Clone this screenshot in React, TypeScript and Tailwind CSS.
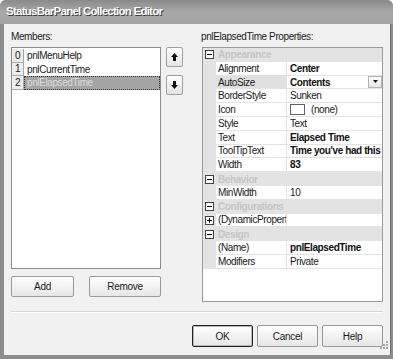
import React from "react";

const font = { fontFamily: '"Liberation Sans", Arial, sans-serif' };

type Prop = {
  kind: "cat" | "prop";
  name: string;
  value?: string;
  bold?: boolean;
  expand?: boolean;
  selected?: boolean;
  dropdown?: boolean;
  swatch?: boolean;
};

const rows: Prop[] = [
  { kind: "cat", name: "Appearance" },
  { kind: "prop", name: "Alignment", value: "Center", bold: true },
  { kind: "prop", name: "AutoSize", value: "Contents", bold: true, selected: true, dropdown: true },
  { kind: "prop", name: "BorderStyle", value: "Sunken" },
  { kind: "prop", name: "Icon", value: "(none)", swatch: true },
  { kind: "prop", name: "Style", value: "Text" },
  { kind: "prop", name: "Text", value: "Elapsed Time", bold: true },
  { kind: "prop", name: "ToolTipText", value: "Time you've had this form open", bold: true },
  { kind: "prop", name: "Width", value: "83", bold: true },
  { kind: "cat", name: "Behavior" },
  { kind: "prop", name: "MinWidth", value: "10" },
  { kind: "cat", name: "Configurations" },
  { kind: "prop", name: "(DynamicProperties)", value: "", expand: true },
  { kind: "cat", name: "Design" },
  { kind: "prop", name: "(Name)", value: "pnlElapsedTime", bold: true },
  { kind: "prop", name: "Modifiers", value: "Private" },
];

const members = ["pnlMenuHelp", "pnlCurrentTime", "pnlElapsedTime"];

function PlusMinus({ plus }: { plus?: boolean }) {
  return (
    <div className="relative w-[9px] h-[9px] border border-[#404040] bg-white">
      <div className="absolute left-[1px] top-[3px] w-[5px] h-px bg-black" />
      {plus && <div className="absolute left-[3px] top-[1px] w-px h-[5px] bg-black" />}
    </div>
  );
}

function Btn({ label, w, def }: { label: string; w: string; def?: boolean }) {
  return (
    <div
      className={`${w} h-full flex items-center justify-center rounded-[2px] border bg-gradient-to-b from-white to-[#e6e6e6] text-[10px] tracking-[-0.3px] text-[#1a1a1a] ${
        def ? "border-[#222] shadow-[inset_0_0_0_1px_#b8b8b8]" : "border-[#9a9a9a]"
      }`}
    >
      {label}
    </div>
  );
}

function Arrow({ up }: { up?: boolean }) {
  return (
    <div className="w-[17px] h-[20px] flex items-center justify-center rounded-[2px] border border-[#a0a0a0] bg-gradient-to-b from-white to-[#e4e4e4]">
      <svg width="7" height="8" viewBox="0 0 7 8">
        {up ? (
          <path d="M3.5 0 L7 4 H5 V8 H2 V4 H0 Z" fill="#111" />
        ) : (
          <path d="M3.5 8 L7 4 H5 V0 H2 V4 H0 Z" fill="#111" />
        )}
      </svg>
    </div>
  );
}

export default function App() {
  return (
    <div
      className="w-[393px] h-[359px] flex flex-col bg-[#8d8d8d] rounded-t-[6px] overflow-hidden"
      style={font}
    >
      {/* title bar */}
      <div className="h-[24px] shrink-0 flex items-center pl-[6px] bg-gradient-to-b from-[#8a8a8a] via-[#a9a9a9] to-[#a4a4a4]">
        <span className="text-[11.5px] font-bold tracking-[-0.75px] text-white [text-shadow:1px_1px_0_#3c3c3c]">
          StatusBarPanel Collection Editor
        </span>
      </div>

      <div className="flex-1 flex px-[4px] pb-[4px] pr-[5px]">
        <div className="flex-1 flex flex-col bg-[#f1f1f1] px-[7px] text-[10px] tracking-[-0.4px] text-[#1a1a1a] border-r border-[#6e6e6e]">
          <div className="flex h-[23px] items-end pb-[3px]">
            <div className="w-[190px] pl-0">Members:</div>
            <div>pnlElapsedTime Properties:</div>
          </div>

          <div className="flex">
            {/* left column */}
            <div className="flex flex-col w-[150px]">
              <div className="h-[222px] border border-[#8c8c8c] bg-white pt-px">
                {members.map((m, i) => (
                  <div key={m} className="flex h-[13.5px]">
                    <div className="w-[12px] flex items-center justify-center bg-[#ececec] border-r border-b border-[#a8a8a8] border-t-white">
                      {i}
                    </div>
                    <div
                      className={`flex-1 flex items-center pl-[3px] ${
                        i === 2
                          ? "bg-[#a4a4a4] text-[#dedede] outline outline-1 outline-dotted outline-offset-[-1px] outline-[#303030]"
                          : ""
                      }`}
                    >
                      {m}
                    </div>
                  </div>
                ))}
              </div>
              <div className="flex justify-between h-[21px] mt-[7px]">
                <Btn label="Add" w="w-[63px]" />
                <Btn label="Remove" w="w-[72px]" />
              </div>
            </div>

            {/* arrows */}
            <div className="flex flex-col gap-[8px] ml-[5px] w-[17px]">
              <Arrow up />
              <Arrow />
            </div>

            {/* property grid */}
            <div className="ml-[19px] w-[181px] h-[255px] border border-[#9a9a9a] bg-white flex flex-col">
              {rows.map((r, i) =>
                r.kind === "cat" ? (
                  <div key={i} className="flex h-[13.8px] bg-[#e3e3e3] items-center">
                    <div className="w-[13px] flex justify-center">
                      <PlusMinus />
                    </div>
                    <span className="pl-[2px] font-bold text-[#c6c6c6]">{r.name}</span>
                  </div>
                ) : (
                  <div key={i} className="flex h-[13.8px]">
                    <div className="w-[13px] bg-[#e3e3e3] flex items-center justify-center">
                      {r.expand && <PlusMinus plus />}
                    </div>
                    <div
                      className={`w-[71px] flex items-center pl-[2px] border-b border-r border-[#e3e3e3] overflow-hidden whitespace-nowrap ${
                        r.selected ? "bg-[#e0e0e0]" : ""
                      }`}
                    >
                      {r.name}
                    </div>
                    <div
                      className={`flex-1 flex items-center pl-[3px] border-b border-[#e3e3e3] overflow-hidden whitespace-nowrap ${
                        r.bold ? "font-bold text-[#111]" : ""
                      }`}
                    >
                      {r.swatch && (
                        <div className="w-[15px] h-[11px] border border-[#606060] bg-white mr-[6px] shrink-0" />
                      )}
                      <span className="flex-1 overflow-hidden">{r.value}</span>
                      {r.dropdown && (
                        <div className="w-[14px] h-[12px] shrink-0 flex items-center justify-center border border-[#b4b4b4] bg-gradient-to-b from-white to-[#e4e4e4]">
                          <svg width="5" height="3" viewBox="0 0 5 3">
                            <path d="M0 0 H5 L2.5 3 Z" fill="#111" />
                          </svg>
                        </div>
                      )}
                    </div>
                  </div>
                )
              )}
            </div>
          </div>

          {/* separator */}
          <div className="mt-[9px] h-[2px] border-t border-[#d6d6d6] border-b border-b-white" />

          {/* bottom buttons */}
          <div className="flex justify-end items-start h-[22px] mt-[12px] gap-[4px] relative">
            <Btn label="OK" w="w-[61px]" def />
            <Btn label="Cancel" w="w-[61px]" />
            <Btn label="Help" w="w-[61px]" />
            <svg className="absolute right-[-6px] top-[15px]" width="12" height="12" viewBox="0 0 12 12">
              <g fill="#a8a8a8">
                <rect x="9" y="1" width="2" height="2" />
                <rect x="6" y="4" width="2" height="2" />
                <rect x="9" y="4" width="2" height="2" />
                <rect x="3" y="7" width="2" height="2" />
                <rect x="6" y="7" width="2" height="2" />
                <rect x="9" y="7" width="2" height="2" />
              </g>
            </svg>
          </div>
        </div>
      </div>
    </div>
  );
}
